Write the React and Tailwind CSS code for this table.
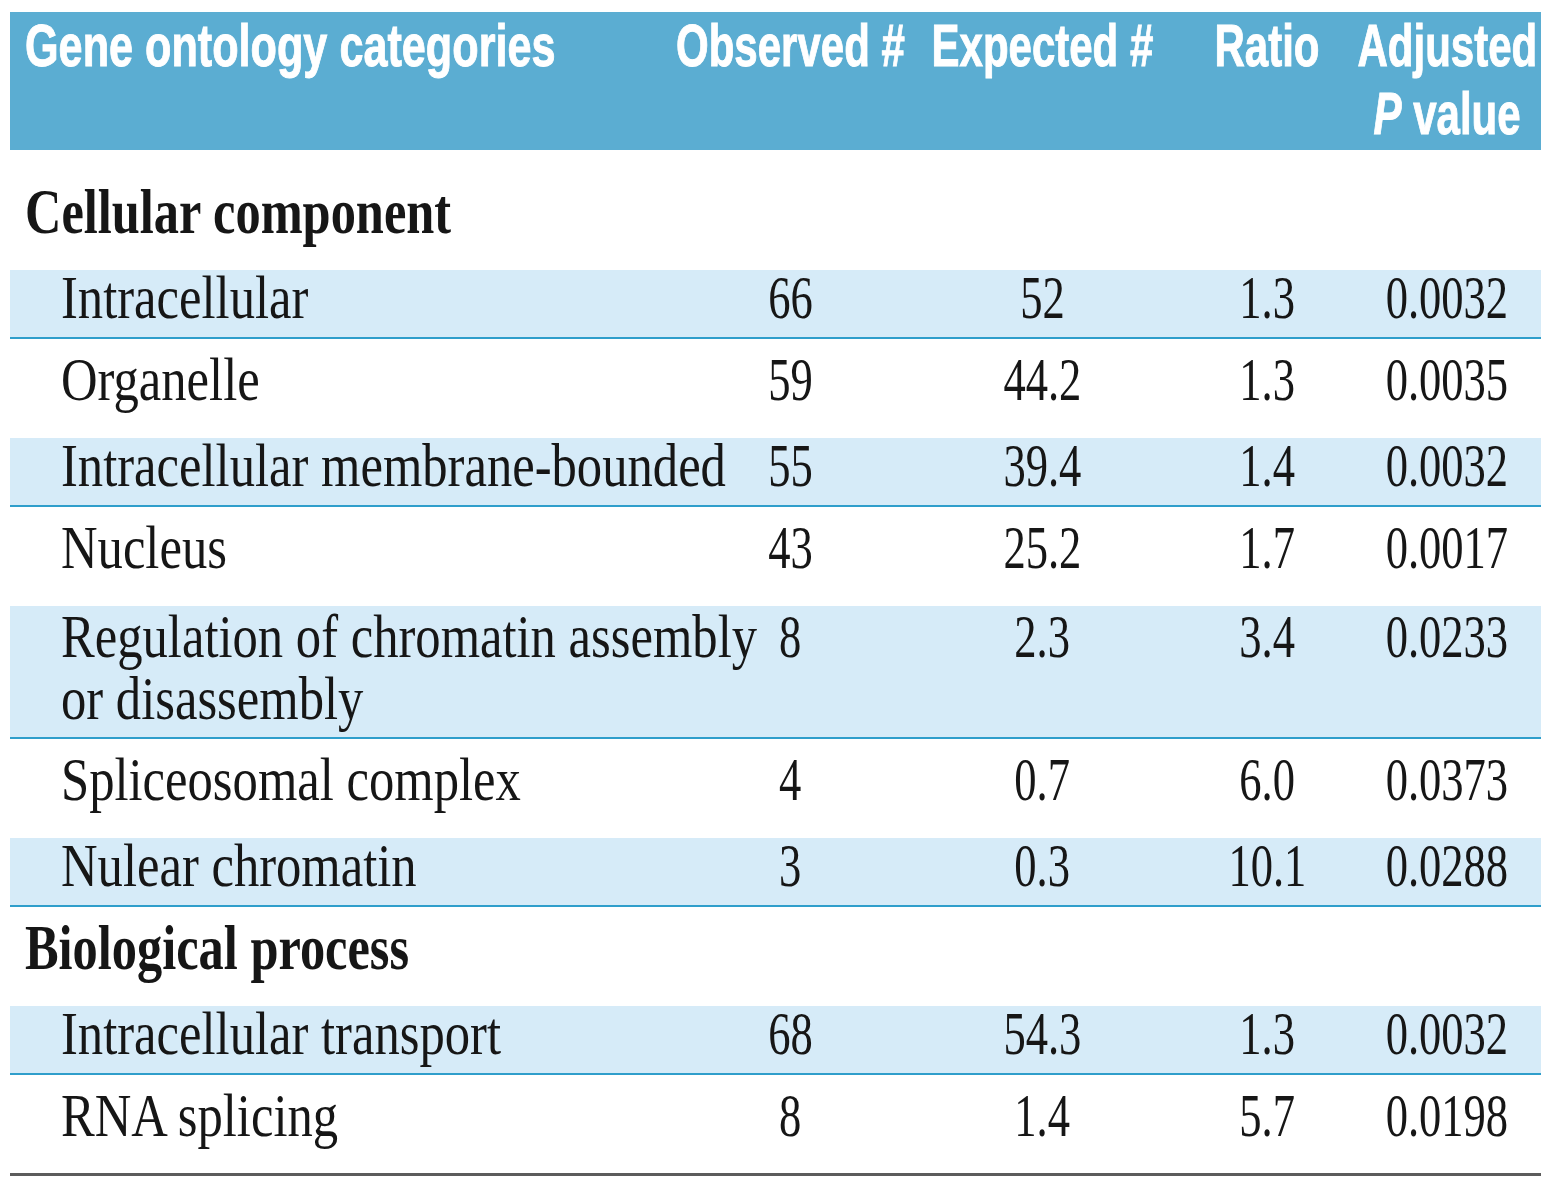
import React from "react";

/* Rows of the enrichment table; sections are the bold group titles */
const rows = [
  { section: "Cellular component", first: true },
  { name: ["Intracellular"], obs: "66", exp: "52", ratio: "1.3", p: "0.0032", shaded: true },
  { name: ["Organelle"], obs: "59", exp: "44.2", ratio: "1.3", p: "0.0035" },
  { name: ["Intracellular membrane-bounded"], obs: "55", exp: "39.4", ratio: "1.4", p: "0.0032", shaded: true },
  { name: ["Nucleus"], obs: "43", exp: "25.2", ratio: "1.7", p: "0.0017" },
  { name: ["Regulation of chromatin assembly", "or disassembly"], obs: "8", exp: "2.3", ratio: "3.4", p: "0.0233", shaded: true },
  { name: ["Spliceosomal complex"], obs: "4", exp: "0.7", ratio: "6.0", p: "0.0373" },
  { name: ["Nulear chromatin"], obs: "3", exp: "0.3", ratio: "10.1", p: "0.0288", shaded: true },
  { section: "Biological process" },
  { name: ["Intracellular transport"], obs: "68", exp: "54.3", ratio: "1.3", p: "0.0032", shaded: true },
  { name: ["RNA splicing"], obs: "8", exp: "1.4", ratio: "5.7", p: "0.0198", last: true },
];

const cols = "grid grid-cols-[667px_226px_278px_172px_188px]";
const serif = "font-['Liberation_Serif','Times_New_Roman',serif] text-[#161616]";
const sans =
  "font-['Liberation_Sans',Arial,sans-serif] font-bold text-white text-[60px] leading-[68px] [-webkit-text-stroke:1px_white]";

/* A condensed header word: Arial bold squeezed to match the original face */
const HeadText = ({ children }) => (
  <span className="inline-block whitespace-nowrap scale-x-[0.7] origin-center">{children}</span>
);

const Num = ({ value }) => (
  <div className="flex justify-center">
    <span className="inline-block whitespace-nowrap scale-x-[0.73] origin-center">{value}</span>
  </div>
);

const DataRow = ({ row }) => {
  const twoLine = row.name.length > 1;
  // heights include the 2px rule (border-box)
  const box = row.shaded
    ? `${twoLine ? "h-[133px] leading-[62px]" : "h-[69px] leading-[56px]"} bg-[#d6ebf8] border-b-2 border-[#2f9ecb]`
    : `${row.last ? "h-[98px]" : "h-[99px]"} pt-[13px] leading-[56px]`;
  return (
    <div className={`${cols} ${box} ${serif} text-[61px]`}>
      <div className="pl-[51px]">
        {row.name.map((line) => (
          <div key={line}>
            <span className="inline-block whitespace-nowrap scale-x-[0.83] origin-left">{line}</span>
          </div>
        ))}
      </div>
      <Num value={row.obs} />
      <Num value={row.exp} />
      <Num value={row.ratio} />
      <Num value={row.p} />
    </div>
  );
};

const SectionRow = ({ title, first }) => (
  <div className={`${first ? "h-[120px] pt-[31px]" : "h-[99px] pt-[10px]"} pl-[15px] ${serif} font-bold text-[63px] leading-[62px]`}>
    <span className="inline-block whitespace-nowrap scale-x-[0.8] origin-left">{title}</span>
  </div>
);

export default function App() {
  return (
    <div className="min-h-screen bg-white pt-[12px] px-[10px]">
      <div className="w-[1531px]">
        {/* Blue column header */}
        <div className={`${cols} h-[138px] bg-[#5badd2] ${sans}`}>
          <div className="pl-[15px]">
            <span className="inline-block whitespace-nowrap scale-x-[0.72] origin-left">Gene ontology categories</span>
          </div>
          <div className="flex justify-center"><HeadText>Observed #</HeadText></div>
          <div className="flex justify-center"><HeadText>Expected #</HeadText></div>
          <div className="flex justify-center"><HeadText>Ratio</HeadText></div>
          <div className="flex flex-col items-center">
            <HeadText>Adjusted</HeadText>
            <HeadText><i>P</i> value</HeadText>
          </div>
        </div>

        {rows.map((row, i) =>
          row.section ? (
            <SectionRow key={i} title={row.section} first={row.first} />
          ) : (
            <DataRow key={i} row={row} />
          )
        )}

        <div className="h-[3px] bg-[#5c5c5c]" />
      </div>
    </div>
  );
}
